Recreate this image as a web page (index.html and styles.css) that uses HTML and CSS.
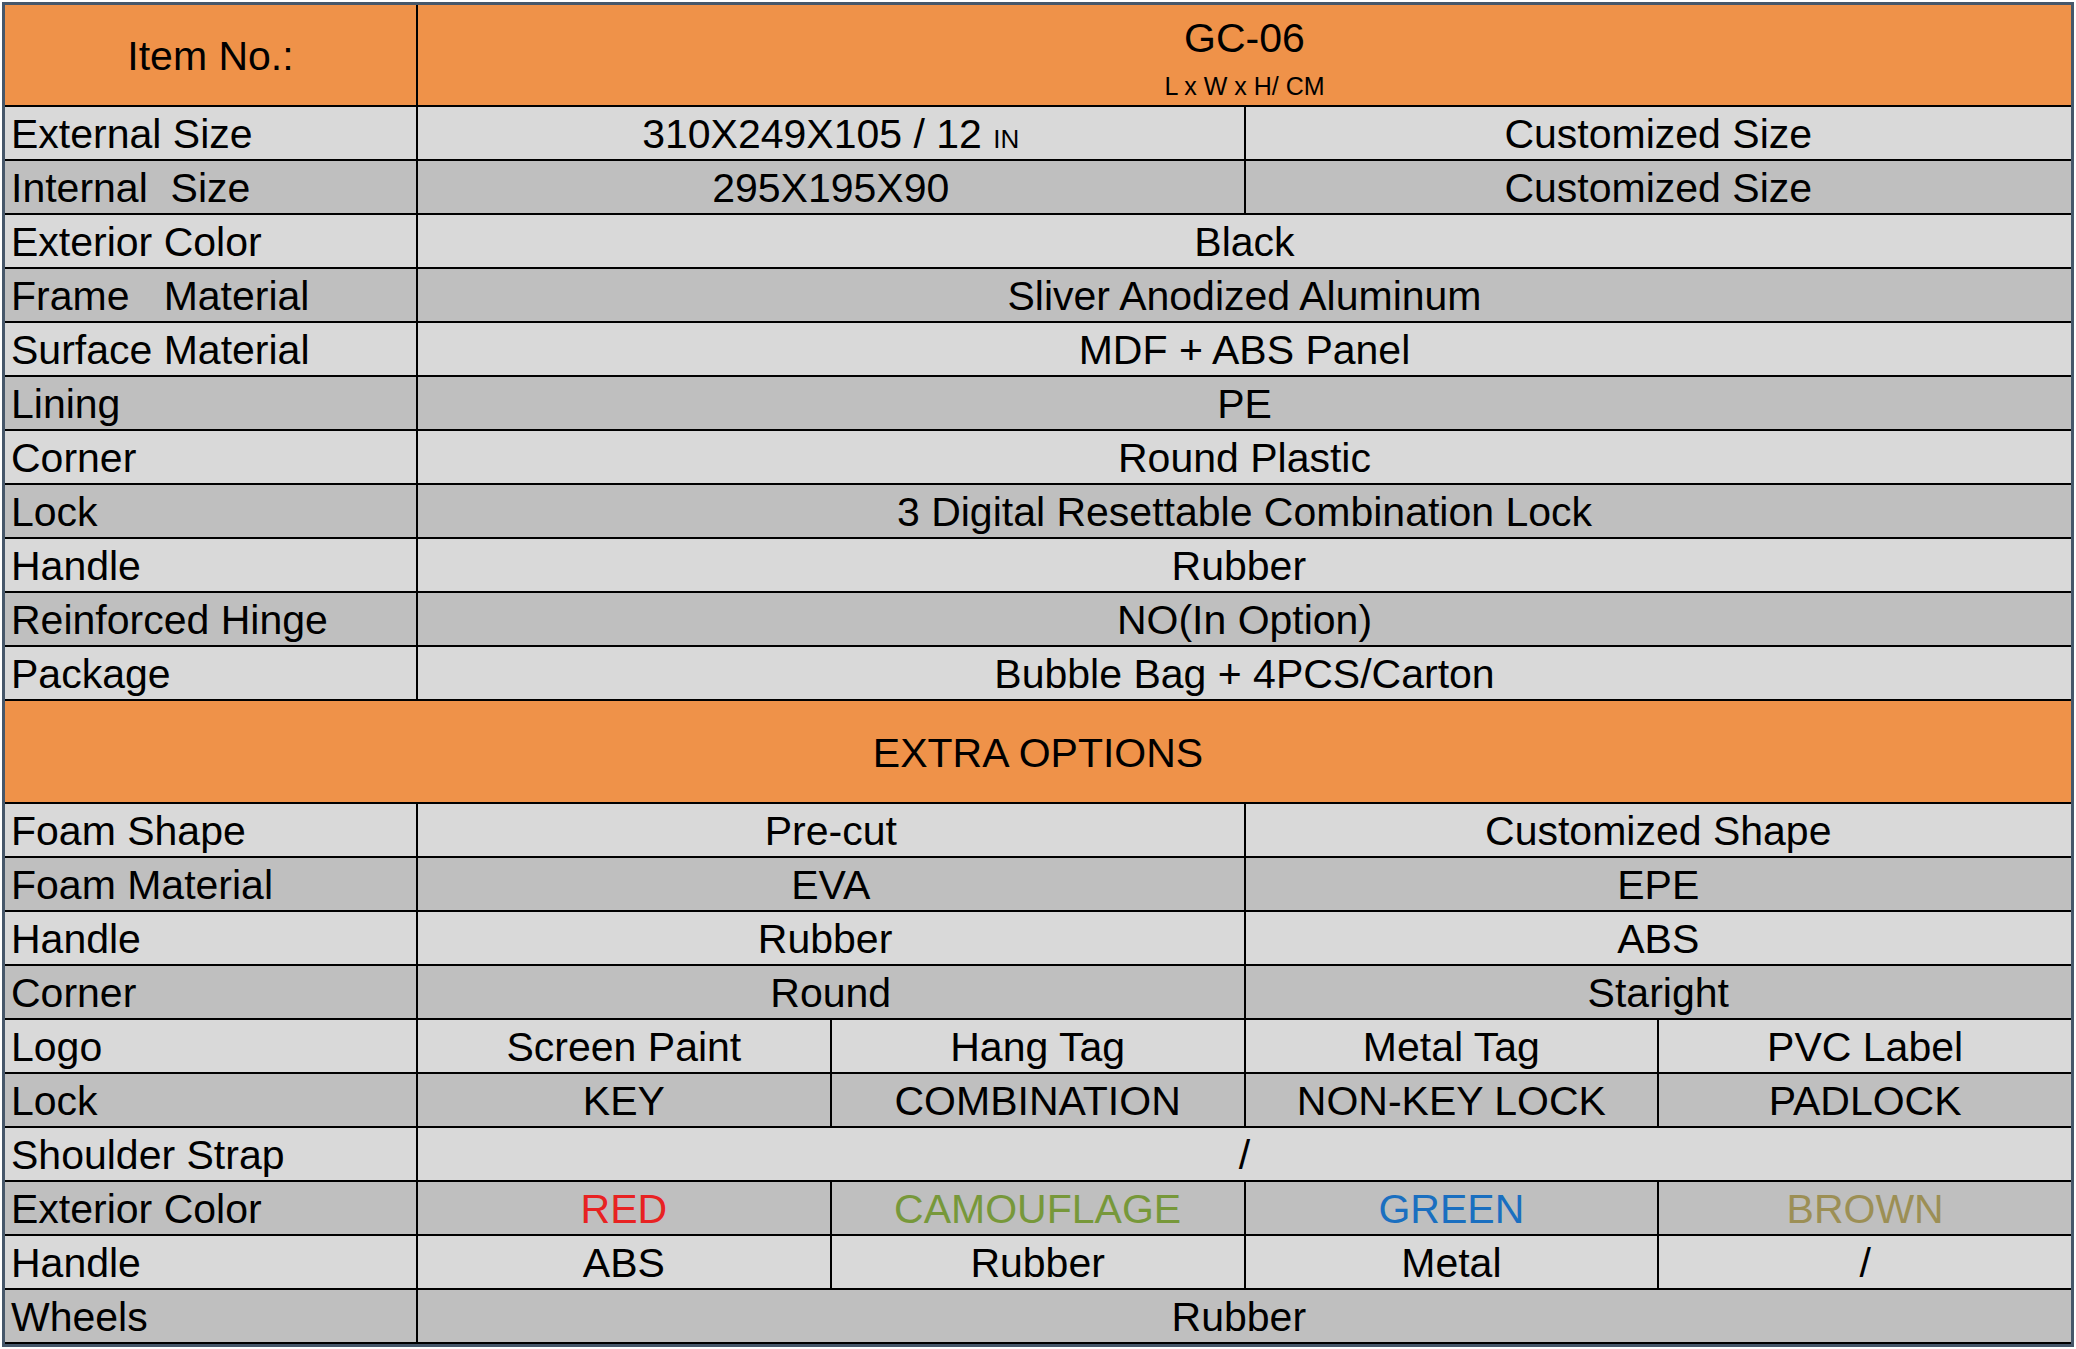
FILE: index.html
```html
<!DOCTYPE html>
<html>
<head>
<meta charset="utf-8">
<link rel="stylesheet" href="styles.css">
</head>
<body>
<div class="frame">
  <div class="sheet">
    <div class="row orange">
      <div class="lbl head-lbl">Item No.:</div>
      <div class="s4 head-val"><div class="gc">GC-06</div><div class="unit">L x W x H/ CM</div></div>
    </div>
    <div class="row light">
      <div class="lbl">External Size</div>
      <div class="s2"><span>310X249X105 / 12 <span class="small">IN</span></span></div>
      <div class="s2">Customized Size</div>
    </div>
    <div class="row dark">
      <div class="lbl">Internal  Size</div>
      <div class="s2">295X195X90</div>
      <div class="s2">Customized Size</div>
    </div>
    <div class="row light">
      <div class="lbl">Exterior Color</div>
      <div class="s4">Black</div>
    </div>
    <div class="row dark">
      <div class="lbl">Frame   Material</div>
      <div class="s4">Sliver Anodized Aluminum</div>
    </div>
    <div class="row light">
      <div class="lbl">Surface Material</div>
      <div class="s4">MDF + ABS Panel</div>
    </div>
    <div class="row dark">
      <div class="lbl">Lining</div>
      <div class="s4">PE</div>
    </div>
    <div class="row light">
      <div class="lbl">Corner</div>
      <div class="s4">Round Plastic</div>
    </div>
    <div class="row dark">
      <div class="lbl">Lock</div>
      <div class="s4">3 Digital Resettable Combination Lock</div>
    </div>
    <div class="row light">
      <div class="lbl">Handle</div>
      <div class="s4">Rubber </div>
    </div>
    <div class="row dark">
      <div class="lbl">Reinforced Hinge</div>
      <div class="s4">NO(In Option)</div>
    </div>
    <div class="row light">
      <div class="lbl">Package</div>
      <div class="s4">Bubble Bag + 4PCS/Carton</div>
    </div>
    <div class="row orange">
      <div class="s5 extra">EXTRA OPTIONS</div>
    </div>
    <div class="row light">
      <div class="lbl">Foam Shape</div>
      <div class="s2">Pre-cut</div>
      <div class="s2">Customized Shape</div>
    </div>
    <div class="row dark">
      <div class="lbl">Foam Material</div>
      <div class="s2">EVA</div>
      <div class="s2">EPE</div>
    </div>
    <div class="row light">
      <div class="lbl">Handle</div>
      <div class="s2">Rubber </div>
      <div class="s2">ABS</div>
    </div>
    <div class="row dark">
      <div class="lbl">Corner</div>
      <div class="s2">Round</div>
      <div class="s2">Staright</div>
    </div>
    <div class="row light">
      <div class="lbl">Logo</div>
      <div>Screen Paint</div>
      <div>Hang Tag</div>
      <div>Metal Tag</div>
      <div>PVC Label</div>
    </div>
    <div class="row dark">
      <div class="lbl">Lock</div>
      <div>KEY</div>
      <div>COMBINATION</div>
      <div>NON-KEY LOCK</div>
      <div>PADLOCK</div>
    </div>
    <div class="row light">
      <div class="lbl">Shoulder Strap</div>
      <div class="s4">/</div>
    </div>
    <div class="row dark">
      <div class="lbl">Exterior Color</div>
      <div class="red">RED</div>
      <div class="camo">CAMOUFLAGE</div>
      <div class="blue">GREEN</div>
      <div class="brown">BROWN</div>
    </div>
    <div class="row light">
      <div class="lbl">Handle</div>
      <div>ABS</div>
      <div>Rubber</div>
      <div>Metal</div>
      <div>/</div>
    </div>
    <div class="row dark">
      <div class="lbl">Wheels</div>
      <div class="s4">Rubber </div>
    </div>
  </div>
</div>
</body>
</html>
```

FILE: styles.css
```css
html, body {
  margin: 0;
  padding: 0;
  background: #ffffff;
}

body {
  font-family: "Liberation Sans", Arial, sans-serif;
  color: #000;
}

.frame {
  margin: 2px 0 0 2px;
  width: 2066px;
  border: 3px solid #46576a;
}

.sheet {
  display: grid;
  grid-template-columns: 411px repeat(4, 1fr);
  grid-template-rows: 100px repeat(11, 52px) 101px repeat(10, 52px);
  gap: 2px;
  background: #000;
  padding-bottom: 2px;
}

.row {
  display: contents;
}

.row > div {
  display: flex;
  align-items: center;
  justify-content: center;
  font-size: 41px;
  white-space: pre;
  overflow: hidden;
  padding-top: 3px;
  box-sizing: border-box;
}

.row.light > div { background: #d9d9d9; }
.row.dark > div { background: #bfbfbf; }
.row.orange > div { background: #ef9249; }

.row > .lbl {
  justify-content: flex-start;
  padding-left: 6px;
  grid-column: 1;
}

.row > .head-lbl {
  justify-content: center;
  padding-left: 0;
}

.s2 { grid-column: span 2; }
.s4 { grid-column: span 4; }
.s5 { grid-column: span 5; }

.row > .head-val {
  display: block;
  text-align: center;
  padding-top: 10px;
}

.gc {
  font-size: 41px;
  line-height: 46px;
}

.unit {
  font-size: 25px;
  line-height: 40px;
  margin-top: 5px;
}

.small {
  font-size: 26px;
}

.red { color: #e82222; }
.camo { color: #77983a; }
.blue { color: #1a6fc0; }
.brown { color: #9c8f55; }
```
